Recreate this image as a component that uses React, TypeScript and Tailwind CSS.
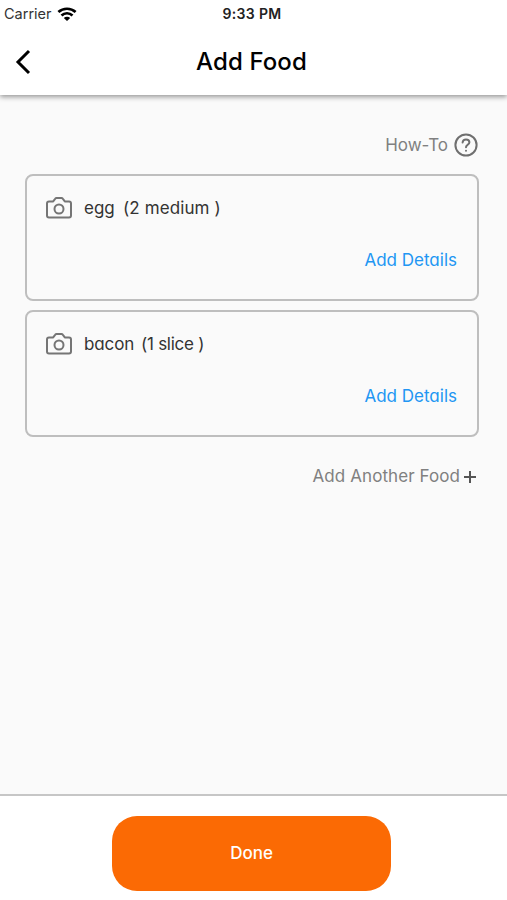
import React from 'react';

interface FoodItem {
  id: number;
  name: string;
  amount: string;
  nameClass: string;
  amountClass: string;
}

const FOODS: FoodItem[] = [
  { id: 1, name: 'egg', amount: '(2 medium )', nameClass: 'w-[39px]', amountClass: 'tracking-[0.1px]' },
  { id: 2, name: 'bacon', amount: '(1 slice )', nameClass: 'w-[57px] tracking-[-0.1px]', amountClass: 'tracking-[-0.25px]' },
];

const WifiIcon = () => (
  <svg viewBox="0 0 20 14" className="h-[14px] w-[20px]" fill="none" stroke="#000" strokeWidth="2.7">
    <path d="M1.4 5.1C6.2.6 13.8.6 18.6 5.1" />
    <path d="M4.5 8.4C7.6 5.5 12.4 5.5 15.5 8.4" />
    <path d="M10 14 6.8 10.9C8.5 9.3 11.5 9.3 13.2 10.9Z" fill="#000" stroke="none" />
  </svg>
);

const CameraIcon = () => (
  <svg viewBox="0 0 26 22" className="h-[22px] w-[26px] shrink-0" fill="none" stroke="#757575" strokeWidth="2" strokeLinejoin="round">
    <path d="M3 4.4H7.2L9.3 1.6Q9.7 1 10.5 1H15.5Q16.3 1 16.7 1.6L18.8 4.4H23Q25 4.4 25 6.4V18.6Q25 20.6 23 20.6H3Q1 20.6 1 18.6V6.4Q1 4.4 3 4.4Z" />
    <circle cx="13" cy="12" r="4.5" />
  </svg>
);

const HelpIcon = () => (
  <svg viewBox="0 0 24 24" className="h-6 w-6" fill="none" stroke="#6f6f6f" strokeWidth="2" strokeLinecap="round">
    <circle cx="12" cy="12" r="10.6" />
    <path d="M8.6 9.5C8.8 7.5 10.1 6.4 12 6.4C14 6.4 15.4 7.6 15.4 9.3C15.4 11.8 12 11.8 12 14.3" />
    <path d="M12 17.7V17.8" />
  </svg>
);

const FoodCard: React.FC<{ food: FoodItem }> = ({ food }) => (
  <div className="flex h-[127px] flex-col justify-between rounded-[8px] border-2 border-[#bebebe] pt-[20px] pr-5 pb-[27px] pl-[19px]">
    <div className="flex items-center text-[17px] leading-6 text-[#333]">
      <CameraIcon />
      <span className={`ml-3 ${food.nameClass}`}>{food.name}</span>
      <span className={food.amountClass}>{food.amount}</span>
    </div>
    <button className="self-end text-[17px] leading-6 text-[#2196f3]">Add Details</button>
  </div>
);

const App: React.FC = () => {
  return (
    <div className="flex h-[900px] w-[507px] flex-col overflow-hidden bg-[#fafafa] font-['Inter',sans-serif] [font-feature-settings:'cv11']">
      {/* Header */}
      <header className="z-10 h-[95px] shrink-0 bg-white shadow-[0_2px_5px_rgba(0,0,0,0.4)]">
        <div className="grid h-7 grid-cols-3 items-center pr-[7px] pl-1 [font-feature-settings:normal]">
          <div className="flex items-center gap-[5px] text-[14.5px] text-[#333]">
            <span>Carrier</span>
            <WifiIcon />
          </div>
          <span className="-mt-px text-center text-[14px] font-semibold tracking-[0.35px] text-[#222]">9:33 PM</span>
        </div>
        <div className="grid h-[67px] grid-cols-[60px_1fr_64px] items-center">
          <button className="pl-[15px]" aria-label="Back">
            <svg viewBox="0 0 16 26" className="h-[26px] w-4" fill="none" stroke="#000" strokeWidth="3">
              <path d="M14 2 3 13 14 24" />
            </svg>
          </button>
          <h1 className="pt-px text-center text-[24px] font-medium tracking-[0.1px] text-black">Add Food</h1>
        </div>
      </header>

      {/* Food list */}
      <main className="flex-1 pr-[28px] pl-[25px]">
        <div className="mt-[38px] flex h-6 items-center justify-end gap-[6px] pr-px text-[17px] text-[#808080]">
          <span className="pt-px">How-To</span>
          <HelpIcon />
        </div>
        <div className="mt-[17px] flex flex-col gap-[9px]">
          {FOODS.map(food => (
            <FoodCard key={food.id} food={food} />
          ))}
        </div>
        <button className="mt-[28px] ml-auto flex h-6 items-center gap-1 pr-[3px] text-[17px] text-[#808080]">
          <span className="tracking-[0.08px]">Add Another Food</span>
          <svg viewBox="0 0 12 12" className="h-3 w-3" stroke="#555" strokeWidth="2">
            <path d="M6 0V12M0 6H12" />
          </svg>
        </button>
      </main>

      {/* Footer */}
      <footer className="flex h-[106px] shrink-0 justify-center border-t-2 border-[#c6c6c6] bg-white pt-5 pr-1">
        <button className="h-[75px] w-[279px] rounded-[25px] bg-[#fb6a04] pt-px text-[17px] font-medium text-white">
          Done
        </button>
      </footer>
    </div>
  );
};

export default App;
